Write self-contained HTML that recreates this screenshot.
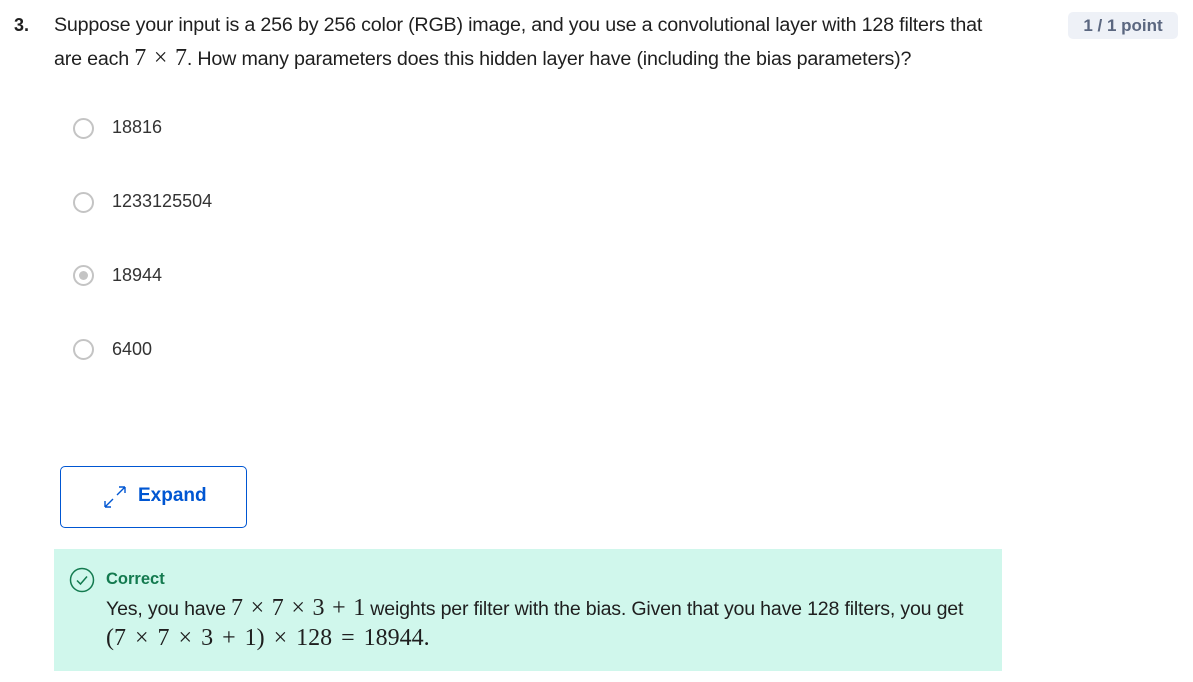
<!DOCTYPE html>
<html><head><meta charset="utf-8"><style>
body{margin:0;width:1193px;height:682px;background:#fff;font-family:"Liberation Sans",sans-serif;color:#1f1f1f;position:relative;overflow:hidden}
.a{position:absolute;white-space:nowrap}
.m{font-family:"Liberation Serif",serif;font-size:24px;word-spacing:2px}
.q{font-size:19.7px;letter-spacing:-0.2px}
.r{position:absolute;left:73px;width:21px;height:21px;border:2px solid #c4c4c4;border-radius:50%;box-sizing:border-box}
.o{position:absolute;left:112px;font-size:18px;color:#333}
</style></head><body>
<div class="a" style="left:14px;top:15px;font-weight:bold;font-size:18px">3.</div>
<div class="a q" style="left:54px;top:14px">Suppose your input is a 256 by 256 color (RGB) image, and you use a convolutional layer with 128 filters that</div>
<div class="a q" style="left:54px;top:45px">are each <span class="m">7 × 7</span>. How many parameters does this hidden layer have (including the bias parameters)?</div>
<div class="a" style="left:1068px;top:12px;width:110px;height:27px;background:#eef1f7;border-radius:5px;color:#5b6780;font-weight:bold;font-size:17px;text-align:center;line-height:27px">1 / 1 point</div>
<div class="r" style="top:118px"></div><div class="a o" style="top:117px">18816</div>
<div class="r" style="top:192px"></div><div class="a o" style="top:191px">1233125504</div>
<div class="r" style="top:265px"><div style="position:absolute;left:4px;top:4px;width:9px;height:9px;border-radius:50%;background:#c4c4c4"></div></div><div class="a o" style="top:265px">18944</div>
<div class="r" style="top:339px"></div><div class="a o" style="top:339px">6400</div>
<div class="a" style="left:60px;top:466px;width:187px;height:62px;border:1px solid #0056d2;border-radius:5px;box-sizing:border-box"></div>
<svg class="a" style="left:103px;top:485px" width="24" height="24" viewBox="0 0 24 24" fill="none" stroke="#0056d2" stroke-width="1.4"><path d="M2 22 L10 14 M2 22 L2 16 M2 22 L8 22 M14 10 L22 2 M22 2 L16 2 M22 2 L22 8"/></svg>
<div class="a" style="left:138px;top:485px;color:#0056d2;font-weight:bold;font-size:19px">Expand</div>
<div class="a" style="left:54px;top:549px;width:948px;height:122px;background:#d0f7ec"></div>
<svg class="a" style="left:69px;top:567px" width="26" height="26" viewBox="0 0 26 26" fill="none" stroke="#137a4f" stroke-width="1.5"><circle cx="13" cy="13" r="11.5"/><path d="M8 13.5 L11.5 17 L18 9.5"/></svg>
<div class="a" style="left:106px;top:570px;color:#137a4f;font-weight:bold;font-size:16.5px">Correct</div>
<div class="a q" style="left:106px;top:595px;font-size:19.6px">Yes, you have <span class="m">7 × 7 × 3 + 1</span> weights per filter with the bias. Given that you have 128 filters, you get</div>
<div class="a m" style="left:106px;top:625px;word-spacing:3px">(7 × 7 × 3 + 1) × 128 = 18944.</div>
</body></html>
